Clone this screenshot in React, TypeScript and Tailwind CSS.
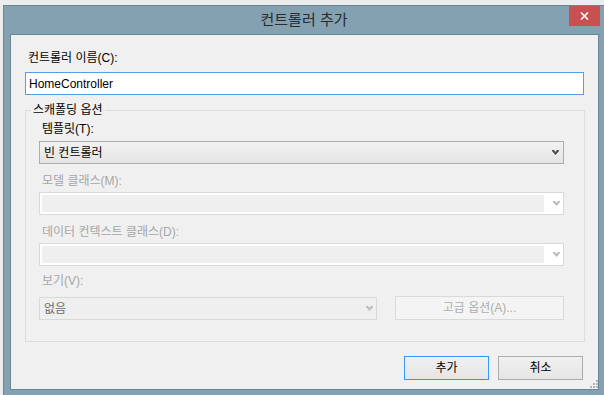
import React from 'react';

const Chevron: React.FC<{ color: string }> = ({ color }) => (
  <svg width="7" height="5" viewBox="0 0 7 5" className="block">
    <path d="M0 0 L2 0 L3.5 2 L5 0 L7 0 L7 1 L3.5 5 L0 1 Z" fill={color} />
  </svg>
);

const DisabledCombo: React.FC = () => (
  <div className="flex h-[23px] border border-[#d9d9d9] bg-white p-[2px]">
    <div className="flex-1 bg-[#efefef]" />
    <div className="flex w-[17px] items-center justify-end pr-[1px]">
      <Chevron color="#b9b9b9" />
    </div>
  </div>
);

const App: React.FC = () => {
  return (
    <div
      className="h-[395px] w-[604px] overflow-hidden bg-[#ececec] pl-[3px] pt-[5px] text-[12px] text-black"
      style={{ fontFamily: '"Liberation Sans", "Noto Sans CJK KR", sans-serif' }}
    >
      <div className="flex h-[390px] w-[601px] flex-col border-l border-t border-[#6a8697] bg-[#83a1b1]">
        {/* title bar */}
        <div className="grid h-[28px] shrink-0 grid-cols-[1fr_auto_1fr]">
          <div />
          <div className="text-[15px] leading-[28px] text-[#2b2b2b]">컨트롤러 추가</div>
          <div className="flex items-start justify-end pr-[4px]">
            <button className="flex h-[20px] w-[31px] items-center justify-center bg-[#c75050]">
              <svg width="9" height="8" viewBox="0 0 9 8">
                <path d="M1 0.5 L8 7.5 M8 0.5 L1 7.5" stroke="#fff" strokeWidth="1.6" />
              </svg>
            </button>
          </div>
        </div>

        {/* client area */}
        <div className="flex-1 pb-[5px] pl-[6px] pr-[5px]">
          <div className="relative flex h-[356px] flex-col border border-[#6a8697] bg-[#f0f0f0]">
            <div className="mt-[15px] pl-[17px] leading-[16px]">컨트롤러 이름(C):</div>
            <div className="mx-[14px] mt-[6px] flex h-[23px] items-center border border-[#569de5] bg-white pl-[3px] leading-[16px]">
              HomeController
            </div>

            {/* scaffolding options */}
            <div className="relative ml-[14px] mr-[13px] mt-[15px] border border-[#dcdcdc] pb-[21px] pl-[13px] pr-[20px]">
              <span className="absolute -top-[9px] left-[5px] bg-[#f0f0f0] px-[2px] leading-[16px]">스캐폴딩 옵션</span>

              <div className="mt-[10px] mb-[4px] pl-[3px] leading-[16px]">템플릿(T):</div>
              <div className="flex h-[23px] items-center justify-between border border-[#acacac] bg-gradient-to-b from-[#f2f2f2] to-[#e4e4e4] pl-[4px] pr-[4px] leading-[16px]">
                <span>빈 컨트롤러</span>
                <Chevron color="#4d4d4d" />
              </div>

              <div className="mt-[9px] mb-[3px] pl-[3px] leading-[16px] text-[#a6a6a6]">모델 클래스(M):</div>
              <DisabledCombo />

              <div className="mt-[9px] mb-[3px] pl-[3px] leading-[16px] text-[#a6a6a6]">데이터 컨텍스트 클래스(D):</div>
              <DisabledCombo />

              <div className="mt-[7px] mb-[7px] pl-[3px] leading-[16px] text-[#a6a6a6]">보기(V):</div>
              <div className="flex items-end gap-[18px]">
                <div className="flex h-[23px] w-[338px] items-center justify-between border border-[#d9d9d9] bg-[#efefef] pl-[4px] pr-[3px] leading-[16px] text-[#6d6d6d]">
                  <span>없음</span>
                  <Chevron color="#bdbdbd" />
                </div>
                <button className="flex h-[24px] flex-1 items-center justify-center border border-[#d9d9d9] bg-[#f4f4f4] leading-[16px] text-[#adadad]">
                  고급 옵션(A)...
                </button>
              </div>
            </div>

            {/* dialog buttons */}
            <div className="mt-[14px] flex justify-end gap-[9px] pr-[15px]">
              <button className="flex h-[24px] w-[85px] items-center justify-center border border-[#3399ff] bg-gradient-to-b from-[#f0f0f0] to-[#e5e5e5] leading-[16px]">
                추가
              </button>
              <button className="flex h-[24px] w-[85px] items-center justify-center border border-[#acacac] bg-gradient-to-b from-[#f0f0f0] to-[#e5e5e5] leading-[16px]">
                취소
              </button>
            </div>

            {/* resize grip */}
            <svg width="8" height="8" viewBox="0 0 8 8" className="absolute bottom-[1px] right-0">
              <rect x="6" y="0" width="2" height="2" fill="#b4b4b4" />
              <rect x="3" y="3" width="2" height="2" fill="#b4b4b4" />
              <rect x="6" y="3" width="2" height="2" fill="#b4b4b4" />
              <rect x="0" y="6" width="2" height="2" fill="#b4b4b4" />
              <rect x="3" y="6" width="2" height="2" fill="#b4b4b4" />
              <rect x="6" y="6" width="2" height="2" fill="#b4b4b4" />
            </svg>
          </div>
        </div>
      </div>
    </div>
  );
};

export default App;
